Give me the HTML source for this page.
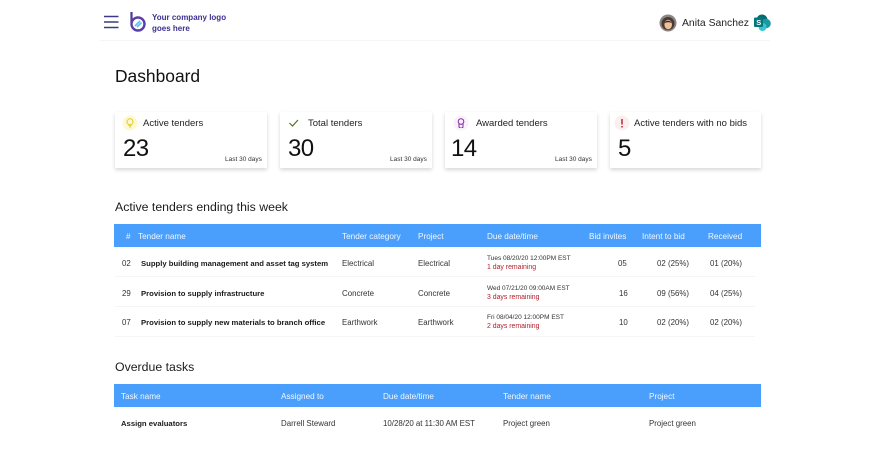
<!DOCTYPE html>
<html><head><meta charset="utf-8">
<style>
html,body{margin:0;padding:0;background:#fff;width:870px;height:455px;overflow:hidden}
body{position:relative;font-family:"Liberation Sans",sans-serif;color:#1c1c1c}
.t{position:absolute;white-space:nowrap;line-height:12px;font-size:7.9px;color:#333;margin-top:1px}
.b{font-weight:bold;color:#1a1a1a;font-size:7.7px}
.logo{margin-top:0;font-size:8px;color:#3c2f8f}
.h{font-size:8.2px;color:#f2f8ff}
.card{position:absolute;top:112px;width:152px;height:56px;background:#fff;box-shadow:0 2px 4px rgba(0,0,0,.16)}
.bar{position:absolute;left:114px;width:647px;height:23px;background:#4a9efc}
.sep{position:absolute;left:115px;width:640px;height:1px;background:#f5f5f5}
.lab{font-size:9.5px;color:#222}
.num{font-size:24px;line-height:28px;color:#111;letter-spacing:-.6px}
.ago{font-size:6.5px;color:#333}
.red{color:#b3202c;font-size:6.9px}
.d{font-size:6.5px;color:#333}
.sec{font-size:12.300px;line-height:16px;color:#1c1c1c;margin-top:0}
</style></head><body>
<div style="position:absolute;left:100px;top:40px;width:670px;height:1px;background:#f5f5f5"></div>

<svg style="position:absolute;left:103px;top:10px" width="50" height="26" viewBox="0 0 50 26">
<path d="M1 6.500H15.500M1 12H15.500M1 17.500H15.500" stroke="#3e3a80" stroke-width="1.400" fill="none"/>
<path d="M28.500 2V13" stroke="#4a3a9a" stroke-width="2.200" fill="none"/>
<circle cx="35" cy="14" r="6.500" fill="#fff" stroke="#5b3fa6" stroke-width="2.400"/>
<path d="M32 16L37 11M34 17L38.500 12.500" stroke="#5cc0f0" stroke-width="1.600" fill="none"/>
</svg>
<div class="t b logo" style="left:152px;top:12px">Your company logo</div>
<div class="t b logo" style="left:152px;top:23px">goes here</div>

<svg style="position:absolute;left:659px;top:14px" width="18" height="18" viewBox="0 0 18 18">
<circle cx="9" cy="9" r="8.500" fill="#8a8683"/>
<circle cx="9" cy="9.500" r="6.500" fill="#4a3a34"/>
<ellipse cx="9.200" cy="10.500" rx="3.800" ry="4.800" fill="#eec09c"/>
<path d="M5.500 9C6 6 12 6 12.800 9C11 8 8 8 5.500 9Z" fill="#3a2a24"/>
</svg>
<div class="t" style="left:682px;top:17px;font-size:10.400px;color:#222">Anita Sanchez</div>
<svg style="position:absolute;left:754px;top:14px" width="18" height="18" viewBox="0 0 18 18">
<circle cx="8" cy="6" r="5.500" fill="#036c70"/>
<circle cx="12" cy="9.500" r="4.800" fill="#1a9ba1"/>
<circle cx="8.500" cy="13" r="4" fill="#37c6d0"/>
<rect x="0" y="3.500" width="9" height="9.500" rx="1" fill="#03787c"/>
<text x="2.200" y="11" font-size="7.500" font-weight="bold" fill="#fff" font-family="Liberation Sans">S</text>
</svg>

<div class="t" style="left:115px;top:66px;margin-top:0;font-size:17.400px;line-height:20px;color:#111">Dashboard</div>

<div class="card" style="left:115px"></div>
<div class="card" style="left:280px"></div>
<div class="card" style="left:445px"></div>
<div class="card" style="left:610px;width:151px"></div>

<svg style="position:absolute;left:122px;top:115px" width="16" height="16" viewBox="0 0 16 16">
<circle cx="8" cy="8" r="7.500" fill="#fdf8d4"/>
<circle cx="8" cy="6.800" r="3" fill="none" stroke="#e8c91c" stroke-width="1"/>
<path d="M6.500 10.500H9.500M7 12H9" stroke="#e8c91c" stroke-width="1"/>
</svg>
<div class="t lab" style="left:143px;top:117px">Active tenders</div>
<div class="t num" style="left:123px;top:134px">23</div>
<div class="t ago" style="left:225px;top:153px">Last 30 days</div>

<svg style="position:absolute;left:286px;top:115px" width="16" height="16" viewBox="0 0 16 16">
<path d="M3.500 8L6.500 11L12 5" fill="none" stroke="#55701c" stroke-width="1.200"/>
</svg>
<div class="t lab" style="left:308px;top:117px">Total tenders</div>
<div class="t num" style="left:288px;top:134px">30</div>
<div class="t ago" style="left:390px;top:153px">Last 30 days</div>

<svg style="position:absolute;left:453px;top:115px" width="16" height="16" viewBox="0 0 16 16">
<circle cx="8" cy="8" r="7.500" fill="#f8f1fa"/>
<circle cx="8" cy="6.500" r="2.800" fill="none" stroke="#8a2aa8" stroke-width="1"/>
<path d="M6 9V12.500M10 9V12.500M6 12.500H7.500M8.500 12.500H10" stroke="#8a2aa8" stroke-width="1" fill="none"/>
</svg>
<div class="t lab" style="left:476px;top:117px">Awarded tenders</div>
<div class="t num" style="left:451px;top:134px">14</div>
<div class="t ago" style="left:555px;top:153px">Last 30 days</div>

<svg style="position:absolute;left:614px;top:115px" width="16" height="16" viewBox="0 0 16 16">
<circle cx="8" cy="8" r="7.500" fill="#fbeeee"/>
<path d="M8 4V9.500M8 11V12.500" stroke="#c4202c" stroke-width="1.500"/>
</svg>
<div class="t lab" style="left:634px;top:117px">Active tenders with no bids</div>
<div class="t num" style="left:618px;top:134px">5</div>

<div class="t sec" style="left:115px;top:198.500px">Active tenders ending this week</div>
<div class="bar" style="top:224px"></div>
<div class="t h" style="left:126px;top:230px">#</div>
<div class="t h" style="left:138px;top:230px">Tender name</div>
<div class="t h" style="left:342px;top:230px">Tender category</div>
<div class="t h" style="left:418px;top:230px">Project</div>
<div class="t h" style="left:487px;top:230px">Due date/time</div>
<div class="t h" style="left:589px;top:230px">Bid invites</div>
<div class="t h" style="left:642px;top:230px">Intent to bid</div>
<div class="t h" style="left:708px;top:230px">Received</div>

<div class="t" style="left:122px;top:257px">02</div>
<div class="t b" style="left:141px;top:257px">Supply building management and asset tag system</div>
<div class="t" style="left:342px;top:257px">Electrical</div>
<div class="t" style="left:418px;top:257px">Electrical</div>
<div class="t d" style="left:487px;top:252px">Tues 08/20/20 12:00PM EST</div>
<div class="t red" style="left:487px;top:261px">1 day remaining</div>
<div class="t" style="left:618px;top:257px">05</div>
<div class="t" style="left:657px;top:257px">02 (25%)</div>
<div class="t" style="left:710px;top:257px">01 (20%)</div>
<div class="sep" style="top:276px"></div>

<div class="t" style="left:122px;top:287px">29</div>
<div class="t b" style="left:141px;top:287px">Provision to supply infrastructure</div>
<div class="t" style="left:342px;top:287px">Concrete</div>
<div class="t" style="left:418px;top:287px">Concrete</div>
<div class="t d" style="left:487px;top:282px">Wed 07/21/20 09:00AM EST</div>
<div class="t red" style="left:487px;top:291px">3 days remaining</div>
<div class="t" style="left:619px;top:287px">16</div>
<div class="t" style="left:657px;top:287px">09 (56%)</div>
<div class="t" style="left:710px;top:287px">04 (25%)</div>
<div class="sep" style="top:306px"></div>

<div class="t" style="left:122px;top:316px">07</div>
<div class="t b" style="left:141px;top:316px">Provision to supply new materials to branch office</div>
<div class="t" style="left:342px;top:316px">Earthwork</div>
<div class="t" style="left:418px;top:316px">Earthwork</div>
<div class="t d" style="left:487px;top:311px">Fri 08/04/20 12:00PM EST</div>
<div class="t red" style="left:487px;top:320px">2 days remaining</div>
<div class="t" style="left:619px;top:316px">10</div>
<div class="t" style="left:657px;top:316px">02 (20%)</div>
<div class="t" style="left:710px;top:316px">02 (20%)</div>
<div class="sep" style="top:336px"></div>

<div class="t sec" style="left:115px;top:358.500px">Overdue tasks</div>
<div class="bar" style="top:384px"></div>
<div class="t h" style="left:121px;top:390px">Task name</div>
<div class="t h" style="left:281px;top:390px">Assigned to</div>
<div class="t h" style="left:383px;top:390px">Due date/time</div>
<div class="t h" style="left:503px;top:390px">Tender name</div>
<div class="t h" style="left:649px;top:390px">Project</div>

<div class="t b" style="left:121px;top:417px">Assign evaluators</div>
<div class="t" style="left:281px;top:417px">Darrell Steward</div>
<div class="t" style="left:383px;top:417px">10/28/20 at 11:30 AM EST</div>
<div class="t" style="left:503px;top:417px">Project green</div>
<div class="t" style="left:649px;top:417px">Project green</div>
</body></html>
